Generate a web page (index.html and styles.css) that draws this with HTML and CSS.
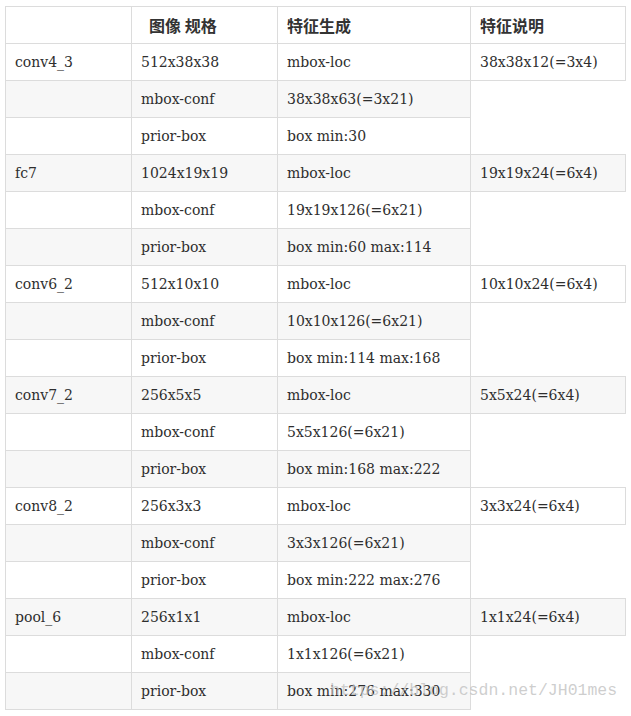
FILE: index.html
```html
<!DOCTYPE html>
<html>
<head>
<meta charset="utf-8">
<link rel="stylesheet" href="styles.css">
</head>
<body>
<div class="wrap">
<table class="grid">
<colgroup><col class="c1"><col class="c2"><col class="c3"><col class="c4"></colgroup>
<thead>
<tr><th></th><th class="indent">图像 规格</th><th>特征生成</th><th>特征说明</th></tr>
</thead>
<tbody>
<tr><td>conv4_3</td><td>512x38x38</td><td>mbox-loc</td><td>38x38x12(=3x4)</td></tr>
<tr><td></td><td>mbox-conf</td><td>38x38x63(=3x21)</td></tr>
<tr><td></td><td>prior-box</td><td>box min:30</td></tr>
<tr><td>fc7</td><td>1024x19x19</td><td>mbox-loc</td><td>19x19x24(=6x4)</td></tr>
<tr><td></td><td>mbox-conf</td><td>19x19x126(=6x21)</td></tr>
<tr><td></td><td>prior-box</td><td>box min:60 max:114</td></tr>
<tr><td>conv6_2</td><td>512x10x10</td><td>mbox-loc</td><td>10x10x24(=6x4)</td></tr>
<tr><td></td><td>mbox-conf</td><td>10x10x126(=6x21)</td></tr>
<tr><td></td><td>prior-box</td><td>box min:114 max:168</td></tr>
<tr><td>conv7_2</td><td>256x5x5</td><td>mbox-loc</td><td>5x5x24(=6x4)</td></tr>
<tr><td></td><td>mbox-conf</td><td>5x5x126(=6x21)</td></tr>
<tr><td></td><td>prior-box</td><td>box min:168 max:222</td></tr>
<tr><td>conv8_2</td><td>256x3x3</td><td>mbox-loc</td><td>3x3x24(=6x4)</td></tr>
<tr><td></td><td>mbox-conf</td><td>3x3x126(=6x21)</td></tr>
<tr><td></td><td>prior-box</td><td>box min:222 max:276</td></tr>
<tr><td>pool_6</td><td>256x1x1</td><td>mbox-loc</td><td>1x1x24(=6x4)</td></tr>
<tr><td></td><td>mbox-conf</td><td>1x1x126(=6x21)</td></tr>
<tr><td></td><td>prior-box</td><td>box min:276 max:330</td></tr>
</tbody>
</table>
<div class="watermark">https://blog.csdn.net/JH01mes</div>
</div>
</body>
</html>
```
FILE: styles.css
```css
html, body {
  margin: 0;
  padding: 0;
  background: #fff;
}
.wrap {
  position: relative;
  padding: 6px 0 0 5px;
}
.grid {
  border-collapse: collapse;
  table-layout: fixed;
  width: 620px;
  font-family: "DejaVu Serif", "Noto Sans CJK SC", serif;
  font-size: 14px;
  color: #2e2e2e;
}
.c1 { width: 126px; }
.c2 { width: 146px; }
.c3 { width: 193px; }
.c4 { width: 155px; }
.grid th,
.grid td {
  border: 1px solid #dcdcdc;
  height: 37px;
  padding: 0 9px;
  box-sizing: border-box;
  text-align: left;
  vertical-align: middle;
  line-height: 20px;
  white-space: nowrap;
}
.grid th {
  font-family: "Noto Sans CJK SC", sans-serif;
  font-weight: bold;
  font-size: 16px;
  color: #333;
  background: #fff;
}
.grid th.indent { padding-left: 17px; }
.grid tbody tr:nth-child(even) td { background: #f7f7f7; }
.grid tbody tr:nth-child(odd) td { background: #fff; }
.watermark {
  position: absolute;
  left: 330px;
  top: 681px;
  font-family: "Liberation Mono", "DejaVu Sans Mono", monospace;
  font-size: 16.5px;
  line-height: 20px;
  color: rgba(190, 190, 190, 0.75);
  white-space: nowrap;
}
```
